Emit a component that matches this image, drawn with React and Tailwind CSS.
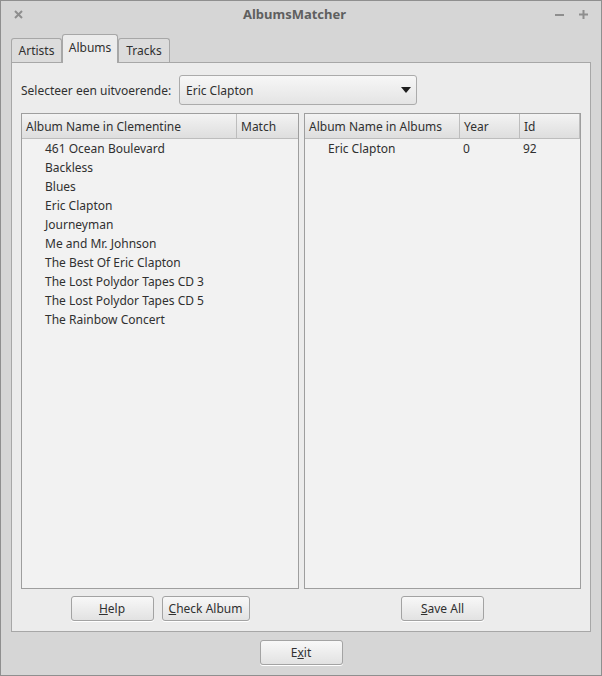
const font = { fontFamily: '"Noto Sans", "DejaVu Sans", sans-serif' };

const leftRows = [
  '461 Ocean Boulevard',
  'Backless',
  'Blues',
  'Eric Clapton',
  'Journeyman',
  'Me and Mr. Johnson',
  'The Best Of Eric Clapton',
  'The Lost Polydor Tapes CD 3',
  'The Lost Polydor Tapes CD 5',
  'The Rainbow Concert',
];

function Button({ children, className = '' }) {
  return (
    <button
      className={`h-[25px] rounded-[3px] border border-[#a3a3a3] bg-gradient-to-b from-[#f8f8f8] to-[#e2e2e2] text-[12px] text-[#303030] shadow-[0_1px_0_#ffffff] ${className}`}
    >
      {children}
    </button>
  );
}

function HeaderCell({ children, className = '' }) {
  return (
    <div className={`flex h-full items-center border-r border-[#bdbdbd] pl-[4px] pt-[1px] ${className}`}>
      {children}
    </div>
  );
}

export default function App() {
  return (
    <div
      style={font}
      className="flex h-[676px] w-[602px] flex-col border border-[#8f8f8f] bg-[#d6d6d6] text-[12px] text-[#303030]"
    >
      {/* title bar */}
      <div className="flex h-[27px] shrink-0 items-center pl-[13px] pr-[11px] text-[#8a8a8a]">
        <svg width="9" height="9" viewBox="0 0 9 9" className="mr-[11px]">
          <path d="M1 1 L8 8 M8 1 L1 8" stroke="#8e8e8e" strokeWidth="2" />
        </svg>
        <div className="flex-1 text-center text-[13px] font-bold text-[#5f5f5f]">AlbumsMatcher</div>
        <svg width="9" height="9" viewBox="0 0 9 9" className="mr-[15px]">
          <path d="M0 5 H9" stroke="#8e8e8e" strokeWidth="2" />
        </svg>
        <svg width="9" height="9" viewBox="0 0 9 9" className="mr-[2px]">
          <path d="M0 4.5 H9 M4.5 0 V9" stroke="#8e8e8e" strokeWidth="2" />
        </svg>
      </div>

      {/* tabs */}
      <div className="flex h-[34px] shrink-0 items-end pl-[10px] pt-[6px]">
        <div className="flex h-[24px] w-[51px] items-center justify-center rounded-t-[3px] border border-b-0 border-[#a7a7a7] bg-[#dcdcdc] pt-[1px]">
          Artists
        </div>
        <div className="relative z-10 -mb-px flex h-[29px] w-[56px] items-center justify-center rounded-t-[3px] border border-b-0 border-[#a7a7a7] bg-[#ececec] pb-[3px]">
          Albums
        </div>
        <div className="flex h-[24px] w-[52px] items-center justify-center rounded-t-[3px] border border-b-0 border-[#a7a7a7] bg-[#dcdcdc] pt-[1px]">
          Tracks
        </div>
      </div>

      {/* pane */}
      <div className="mx-[10px] flex h-[570px] flex-col border border-[#a7a7a7] bg-[#ececec] px-[9px] pt-[12px]">
        <div className="flex h-[30px] items-center">
          <span className="w-[158px] whitespace-nowrap pt-[1px]">Selecteer een uitvoerende:</span>
          <div className="flex h-[30px] w-[238px] items-center justify-between rounded-[3px] border border-[#ababab] bg-gradient-to-b from-[#f7f7f7] to-[#e4e4e4] pl-[6px] pr-[5px]">
            <span className="pt-[1px]">Eric Clapton</span>
            <svg width="10" height="6" viewBox="0 0 10 6">
              <path d="M0 0 H10 L5 6 Z" fill="#1e1e1e" />
            </svg>
          </div>
        </div>

        <div className="mt-[8px] flex gap-[5px]">
          {/* left table */}
          <div className="flex h-[476px] w-[278px] flex-col border border-[#9e9e9e] bg-[#f2f2f2]">
            <div className="flex h-[25px] border-b border-[#bdbdbd] bg-gradient-to-b from-[#f3f3f3] to-[#dedede]">
              <HeaderCell className="w-[215px]">Album Name in Clementine</HeaderCell>
              <HeaderCell className="flex-1 border-r-0">Match</HeaderCell>
            </div>
            <div className="flex flex-col">
              {leftRows.map((r) => (
                <div key={r} className="flex h-[19px] items-center pl-[23px]">
                  {r}
                </div>
              ))}
            </div>
          </div>

          {/* right table */}
          <div className="flex h-[476px] flex-1 flex-col border border-[#9e9e9e] bg-[#f2f2f2]">
            <div className="flex h-[25px] border-b border-[#bdbdbd] bg-gradient-to-b from-[#f3f3f3] to-[#dedede]">
              <HeaderCell className="w-[155px]">Album Name in Albums</HeaderCell>
              <HeaderCell className="w-[60px]">Year</HeaderCell>
              <HeaderCell className="flex-1">Id</HeaderCell>
            </div>
            <div className="flex h-[19px] items-center">
              <span className="w-[155px] pl-[23px]">Eric Clapton</span>
              <span className="w-[60px] pl-[3px]">0</span>
              <span className="pl-[3px]">92</span>
            </div>
          </div>
        </div>

        <div className="mt-[7px] flex">
          <div className="flex w-[278px] justify-center gap-[8px]">
            <Button className="w-[83px]">
              <u>H</u>elp
            </Button>
            <Button className="w-[88px]">
              <u>C</u>heck Album
            </Button>
          </div>
          <div className="flex flex-1 justify-center pl-[5px]">
            <Button className="w-[83px]">
              <u>S</u>ave All
            </Button>
          </div>
        </div>
      </div>

      {/* exit */}
      <div className="flex flex-1 items-start justify-center pt-[8px]">
        <Button className="w-[83px]">
          E<u>x</u>it
        </Button>
      </div>
    </div>
  );
}
